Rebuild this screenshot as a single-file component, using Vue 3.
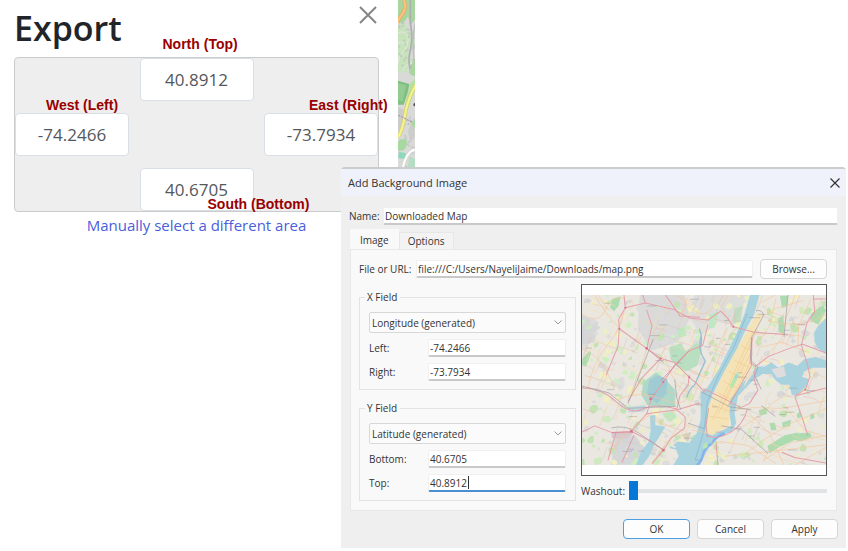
<script setup>
import { ref } from 'vue'

const north = ref('40.8912')
const west = ref('-74.2466')
const east = ref('-73.7934')
const south = ref('40.6705')
const name = ref('Downloaded Map')
const url = ref('file:///C:/Users/NayeliJaime/Downloads/map.png')
const washout = ref(0)

// Seeded generator so the street texture is the same on every load.
let seed = 41
const rnd = () => {
  seed = (seed * 16807) % 2147483647
  return seed / 2147483647
}
const range = (a, b) => Math.round(a + rnd() * (b - a))

const blob = (cx, cy, r) => {
  const pts = []
  for (let i = 0; i < 7; i++) {
    const a = (i / 7) * Math.PI * 2
    const d = r * (0.5 + rnd() * 0.7)
    pts.push(Math.round(cx + Math.cos(a) * d) + ',' + Math.round(cy + Math.sin(a) * d))
  }
  return pts.join(' ')
}
const tones = ['#dcdcdc', '#d6d7d6', '#cfeac0', '#c3e3b4', '#ecefc4', '#dddcda', '#d0eec3', '#f2f0c2']
const patches = Array.from({ length: 380 }, (_, i) => ({
  points: blob(range(22, 754), range(50, 554), range(4, 14)),
  fill: tones[i % tones.length],
}))
const streetTones = ['#f6d3a8', '#f3c9a0', '#eebcb2', '#f5e2a6', '#cfcccb']
const streets = Array.from({ length: 230 }, (_, i) => {
  const x = range(10, 740)
  const y = range(50, 550)
  const steep = rnd() > 0.42
  const l = range(25, 75)
  const dx = steep ? Math.round(l * 0.4) : l
  const dy = steep ? -l : Math.round(l * 0.35)
  return {
    d: `M${x} ${y}q${Math.round(dx / 2) + range(-8, 8)} ${Math.round(dy / 2) + range(-8, 8)} ${dx} ${dy}`,
    stroke: streetTones[i % streetTones.length],
  }
})
const labels = Array.from({ length: 44 }, () => ({
  x: range(30, 720),
  y: range(60, 545),
  w: range(12, 30),
}))
const houses = Array.from({ length: 90 }, () => ({
  x: range(0, 50),
  y: range(60, 500),
})).filter((h) => h.y > 335 || h.y < 200)
</script>

<template>
  <main class="page">
    <section class="export">
      <header class="export-head">
        <h1>Export</h1>
        <button class="dismiss" type="button" aria-label="Close export panel">
          <svg viewBox="0 0 18 18" width="18" height="18"><path d="M1 1L17 17M17 1L1 17" fill="none" stroke="#858585" stroke-width="2" /></svg>
        </button>
      </header>
      <div class="bounds">
        <div class="bound north">
          <label for="north">North (Top)</label>
          <input id="north" v-model="north" type="text" />
        </div>
        <div class="bound west">
          <label for="west">West (Left)</label>
          <input id="west" v-model="west" type="text" />
        </div>
        <div class="bound east">
          <label for="east">East (Right)</label>
          <input id="east" v-model="east" type="text" />
        </div>
        <div class="bound south">
          <label for="south">South (Bottom)</label>
          <input id="south" v-model="south" type="text" />
        </div>
      </div>
      <a class="manual" href="#">Manually select a different area</a>
    </section>

    <svg class="strip" viewBox="0 0 51 504" preserveAspectRatio="none" aria-hidden="true">
      <rect width="51" height="504" fill="#d9dad7" />
      <path d="M0 0H51V60L38 75 30 50 14 72 0 66Z" fill="#a9d69e" />
      <path d="M0 75L22 70 30 100 46 92 51 140 30 150 40 180 22 220 0 212Z" fill="#c6e3bb" />
      <path d="M32 205L51 175V230L35 222Z" fill="#a9d69e" />
      <g fill="none" stroke="#e8e7e2" stroke-width="3">
        <path d="M0 100Q14 90 26 104T20 150Q4 160 0 190M0 130Q12 120 18 134M12 215Q25 190 42 190" />
      </g>
      <path d="M37 0V70Q46 110 37 150T38 205" fill="none" stroke="#aeaeb2" stroke-width="5" />
      <path d="M51 70Q41 120 48 180" fill="none" stroke="#b9b7ba" stroke-width="3" />
      <path d="M0 242L34 252 30 275 17 314H0Z" fill="#7fbf80" />
      <path d="M0 250L24 256 14 305 0 300Z" fill="#93cb91" />
      <path d="M36 252L51 235V270L30 325 20 318Z" fill="#b5e0a6" />
      <g stroke="#c1c1c2" stroke-width="5" opacity=".8">
        <path v-for="(h, i) in houses" :key="i" :d="`M${h.x} ${h.y}l4 5`" />
      </g>
      <path d="M0 320L22 332 15 400 0 410M30 390L50 350V410L36 430Z" fill="#cccdcb" />
      <path d="M0 425Q30 405 26 432T0 450M38 370L51 385V360Z" fill="#a6d9a0" />
      <path d="M3 455L24 460 20 476 0 474Z" fill="#8fd8bd" />
      <path d="M34 475H51V504H28Z" fill="#b5dfc4" />
      <path d="M18 0Q26 26 12 44T0 70" fill="none" stroke="#eda95f" stroke-width="11" />
      <path d="M18 0Q26 26 12 44T0 70" fill="none" stroke="#fbc384" stroke-width="6" />
      <path d="M53 255Q28 300 21 345T0 412" fill="none" stroke="#d2ce68" stroke-width="11" />
      <path d="M53 255Q28 300 21 345T0 412" fill="none" stroke="#f3f391" stroke-width="7" />
      <path d="M0 345L42 366" stroke="#aaa1ae" stroke-width="4" stroke-dasharray="7 3" />
      <path d="M51 448Q22 458 15 504" fill="none" stroke="#fff" stroke-width="6" />
      <circle cx="51" cy="314" r="5" fill="#4b4e4c" />
    </svg>

    <form class="dialog" role="dialog" aria-labelledby="dlg-title" @submit.prevent>
      <header class="titlebar">
        <h2 id="dlg-title">Add Background Image</h2>
        <button class="close" type="button" aria-label="Close dialog">
          <svg viewBox="0 0 10 10" width="10" height="10"><path d="M0.5 0.5L9.5 9.5M9.5 0.5L0.5 9.5" fill="none" stroke="#333" stroke-width="1.2" /></svg>
        </button>
      </header>

      <div class="name-row">
        <label for="name">Name:</label>
        <input id="name" v-model="name" class="field" type="text" />
      </div>

      <div class="tabs" role="tablist">
        <button class="tab active" type="button" role="tab" aria-selected="true">Image</button>
        <button class="tab" type="button" role="tab" aria-selected="false">Options</button>
      </div>

      <div class="panel" role="tabpanel">
        <div class="file-row">
          <label for="url">File or URL:</label>
          <input id="url" v-model="url" class="field" type="text" />
          <button class="btn" type="button">Browse...</button>
        </div>

        <div class="columns">
          <div class="groups">
            <fieldset>
              <legend>X Field</legend>
              <select aria-label="X Field"><option>Longitude (generated)</option></select>
              <div class="pair">
                <label for="left">Left:</label>
                <input id="left" v-model="west" class="field" type="text" />
              </div>
              <div class="pair">
                <label for="right">Right:</label>
                <input id="right" v-model="east" class="field" type="text" />
              </div>
            </fieldset>
            <fieldset>
              <legend>Y Field</legend>
              <select aria-label="Y Field"><option>Latitude (generated)</option></select>
              <div class="pair">
                <label for="bottom">Bottom:</label>
                <input id="bottom" v-model="south" class="field" type="text" />
              </div>
              <div class="pair">
                <label for="top">Top:</label>
                <input id="top" v-model="north" class="field current" type="text" />
                <span class="caret"></span>
              </div>
            </fieldset>
          </div>

          <div class="preview-col">
            <div class="preview">
              <svg viewBox="22 50 732 504" preserveAspectRatio="none" role="img" aria-label="Map preview">
                <rect x="22" y="50" width="732" height="504" fill="#eae7e0" />
                <path d="M195 50H330L345 120 310 190 230 215 190 150Z" fill="#dadada" />
                <path d="M360 50H520L480 140 430 130 380 170 340 110Z" fill="#dddddb" />
                <path d="M22 110L70 130 60 190 22 200ZM120 475L180 465 215 510 180 553H110Z" fill="#d5d6d8" />
                <polygon v-for="(p, i) in patches" :key="'p' + i" :points="p.points" :fill="p.fill" />

                <!-- parks and marshes -->
                <g fill="#addbb0">
                  <path d="M112 62L138 54 132 82 118 98 106 88Z" />
                  <path d="M24 238L44 215 50 222 34 262 22 256Z" />
                  <path d="M616 52H640L636 84 622 88Z" />
                  <path d="M610 120L626 110 630 168 612 160Z" />
                  <path d="M578 498L630 466 672 458 668 476 612 502 584 520Z" />
                  <path d="M655 462L706 458 712 470 680 484 660 480Z" />
                  <path d="M552 392L572 386 578 402 556 408ZM622 428L650 420 646 440 624 442ZM666 405L676 392 682 412 668 416Z" />
                  <path d="M584 430L600 428 606 450 590 452ZM706 404L716 400 720 414 708 420Z" />
                  <path d="M710 105L744 80 754 96 732 138 708 126Z" />
                  <path d="M480 90L505 82 498 130 474 134Z" opacity=".6" />
                </g>
                <path d="M284 204L318 194 334 216 366 190 382 210 368 260 334 276 306 262 288 240Z" fill="#b8e0c0" />
                <path d="M206 308L244 280 272 300 300 330 302 378 262 384 218 376 200 346Z" fill="#afd8c9" />
                <path d="M224 302L248 288 278 300 276 342 246 372 216 346Z" fill="#a0cbd2" />
                <path d="M306 152L330 144 336 170 312 178ZM404 108L432 100 420 146 404 150ZM262 402L296 392 306 414 282 426Z" fill="#bee8c2" />
                <path d="M110 458L176 460 156 476 112 474Z" fill="#d6c9d0" />
                <path d="M320 464L350 456 340 486Z" fill="#d5ceb9" />

                <g fill="none" stroke-width="2" opacity=".75">
                  <path v-for="(s, i) in streets" :key="'s' + i" :d="s.d" :stroke="s.stroke" />
                </g>

                <!-- Manhattan -->
                <path d="M548 104L566 112 532 176 530 264 498 320 468 370 462 440 420 460 398 472 394 430 402 384 446 280Z" fill="#f5e3b8" />
                <g stroke="#f4c98b" stroke-width="2" fill="none">
                  <path d="M536 156L414 420M548 150L430 404M528 222L440 388M526 250L448 400M500 200L532 216M478 244L522 264M462 276L508 300M446 306L492 330M430 340L478 362M412 376L466 396M406 410L462 418" />
                </g>
                <path d="M484 280L494 286 474 326 464 322Z" fill="#b7e6ad" />
                <path d="M486 286L482 298" stroke="#a3d3e2" stroke-width="6" />

                <!-- water -->
                <g fill="#a9d2df">
                  <path d="M526 50H554L538 108 510 160 486 210 446 282 414 344 400 384 392 460 414 466 450 448 470 438 464 400 468 360 506 308 528 284 548 262 570 262 590 250 612 266 642 250 668 260 690 240 724 234 754 244V266L714 266 690 276 682 292 704 300 690 326 668 344 652 348 644 316 620 316 602 302 590 284 564 284 540 298 516 322 490 350 480 400 484 430 470 456 440 464 412 490 392 520 376 554H296L312 528 304 508 282 504 310 484 344 488 366 460 378 420 378 340 398 324 434 268 464 208 492 150 510 104Z" />
                  <path d="M730 142L754 118V226L730 208 720 190 718 162Z" />
                  <path d="M226 408L242 406 242 436 272 440 254 470 240 492 222 530 204 554H184L200 514 222 484 228 452Z" />
                  <path d="M158 382L208 376 218 384 206 396 162 398Z" opacity=".6" />
                </g>
                <path d="M518 104L478 204 428 296 398 368 388 452 362 538" fill="none" stroke="#86b4cf" stroke-width="2" />
                <path d="M450 460Q422 470 410 492 390 500 384 526 380 546 366 554" fill="none" stroke="#82b3ef" stroke-width="7" />
                <path d="M384 496L396 486 400 500 386 508Z" fill="#bce5b0" />
                <path d="M380 170Q366 210 392 246 376 280 360 316 344 328 336 354M374 150Q386 180 376 212" fill="none" stroke="#99bfcf" stroke-width="4" />
                <path d="M282 504L294 512M288 494L302 502M288 516L304 526M266 520L294 532" stroke="#eee8e1" stroke-width="5" />
                <path d="M590 270L628 262 634 290 608 296Z" fill="#dedcdd" />
                <path d="M516 292L528 274 536 282 506 324Z" fill="#e8dfcc" />

                <!-- secondary roads -->
                <g fill="none" stroke="#f4c79c" stroke-width="2">
                  <path d="M22 106Q70 140 92 94T150 60M60 50Q90 104 136 150M22 210Q84 230 120 330M40 326Q54 250 100 196T146 100M188 300L216 210 278 136M70 50L100 94M310 50Q348 92 372 104T430 72 500 52M270 230Q300 330 340 338M128 360Q200 330 266 360T352 332M100 530Q130 470 224 406" />
                  <path d="M462 50L440 84 470 142M454 150L430 206 396 276M480 150L438 220 412 296M560 72L602 50M566 112L604 90 686 66M604 60L584 142 542 204M662 50L634 120 620 182 568 238M710 60L672 140 670 200M540 166L600 164 684 172M562 204L622 190 700 220M580 126Q680 154 754 108" />
                  <path d="M472 392L534 384 620 386 754 364M490 448Q544 420 582 382T650 350M500 530L566 480 650 430 754 388M566 540L648 488 754 466M522 400L584 460 628 554M434 484L520 496 604 550M630 380L690 450 754 470M450 528Q580 516 754 494M660 554L754 502" />
                  <path d="M228 414Q274 446 300 436M260 508L298 458 330 414M234 544L270 498M352 450L392 458M410 468L412 492 436 520" />
                </g>

                <!-- motorways -->
                <g fill="none" stroke="#e5a0aa" stroke-width="3" stroke-linejoin="round">
                  <path d="M148 50L152 88 132 122 134 150 216 208 258 238 300 250 344 294 366 312 390 338" />
                  <path d="M204 50L212 74 300 94 344 118 400 124 438 98 460 120 476 144 536 160 640 168" />
                  <path d="M272 50L316 112 376 116M152 88L212 74M134 150L130 202 94 288M216 208L232 142 216 94" />
                  <path d="M22 326Q80 326 124 366T204 388 306 388M258 238L200 298 160 366" />
                  <path d="M400 138L384 200 342 216 300 258 266 308 230 358 216 402 170 454 112 458 60 438 22 456" />
                  <path d="M344 286L340 318 316 348 306 390 332 412 330 444 290 474 266 510 232 550" />
                  <path d="M170 454L228 484 266 510M124 458L100 540M178 466L142 546M216 402L308 390 376 370" />
                  <path d="M386 328L450 358 498 384 524 372 550 332 538 300 542 262 526 250 532 176M542 262L582 232 650 206 684 196 754 222" />
                  <path d="M716 50L720 100 698 130 680 198 698 254 706 292 692 330 660 350 682 412 700 468" />
                  <path d="M398 468Q426 480 466 458T518 388M424 486L430 554M622 516L660 532 754 548M754 62H716M664 348L754 326" />
                </g>
                <g fill="none" stroke="#d87e93" stroke-width="2">
                  <path d="M398 470L394 436 402 386M532 176L530 260 496 320 462 378M216 208L266 250M112 458H176M344 216L258 304" />
                </g>
                <!-- rail lines -->
                <g fill="none" stroke="#9d9da3" stroke-width="2">
                  <path d="M544 96Q566 94 566 112L530 178 528 244 550 264 540 290 560 330M22 320L102 340 160 386 304 380M236 180L188 302 160 372M378 336L466 382 530 390M440 438L500 448 580 520M640 50L628 174M110 444Q152 434 190 458L268 510M300 300L306 354 318 390M340 430L388 446M560 378L602 410" />
                </g>
                <g fill="#8b8d95">
                  <rect v-for="(l, i) in labels" :key="'l' + i" :x="l.x" :y="l.y" :width="l.w" height="3" opacity=".4" />
                </g>
                <g fill="#dd7088">
                  <circle cx="152" cy="88" r="3" /><circle cx="134" cy="150" r="3" /><circle cx="216" cy="208" r="4" /><circle cx="258" cy="238" r="3" /><circle cx="228" cy="358" r="4" /><circle cx="266" cy="308" r="3" /><circle cx="344" cy="294" r="3" /><circle cx="170" cy="454" r="4" /><circle cx="266" cy="510" r="4" /><circle cx="476" cy="144" r="3" /><circle cx="692" cy="330" r="3" />
                </g>
              </svg>
            </div>
            <div class="washout">
              <label for="washout">Washout:</label>
              <input id="washout" v-model="washout" type="range" min="0" max="100" />
            </div>
          </div>
        </div>
      </div>

      <footer class="actions">
        <button class="btn primary" type="submit">OK</button>
        <button class="btn" type="button">Cancel</button>
        <button class="btn" type="button">Apply</button>
      </footer>
    </form>
  </main>
</template>

<style>
body {
  background: #fff;
}
</style>

<style scoped>
.page,
.page * {
  box-sizing: border-box;
}
.page {
  position: relative;
  display: flex;
  align-items: flex-start;
  min-height: 100vh;
  overflow: hidden;
  font-family: "Open Sans", "Noto Sans", sans-serif;
}
button,
input,
select {
  font: inherit;
  color: inherit;
  margin: 0;
  border-radius: 0;
  outline: none;
}
.export {
  flex: none;
  width: 398px;
  padding: 6px 19px 0 14px;
  display: flex;
  flex-direction: column;
}
.export-head {
  display: flex;
  justify-content: space-between;
  align-items: flex-start;
  height: 51px;
}
h1 {
  margin: 0;
  font-size: 34px;
  line-height: 44px;
  font-weight: 600;
  color: #212529;
}
.dismiss {
  padding: 0;
  margin-right: 2px;
  width: 18px;
  height: 18px;
  border: 0;
  background: none;
}
.dismiss svg,
.close svg {
  display: block;
}
.bounds {
  display: grid;
  grid-template-columns: 114px 114px 114px;
  justify-content: space-between;
  grid-template-rows: 43px 43px 43px;
  row-gap: 12px;
  border: 1px solid #c9cccd;
  border-radius: 4px;
  background: #eee;
}
.bound {
  position: relative;
}
.north {
  grid-area: 1 / 2;
}
.west {
  grid-area: 2 / 1;
}
.east {
  grid-area: 2 / 3;
}
.south {
  grid-area: 3 / 2;
}
.bound input {
  display: block;
  width: 100%;
  height: 100%;
  padding: 0;
  border: 1px solid #d9dfe4;
  border-radius: 4px;
  background: #fff;
  font-size: 17px;
  text-align: center;
  color: #54575b;
}
.bound label {
  position: absolute;
  top: -16px;
  left: 31px;
  font: bold 14px/16px "Liberation Sans", Arial, sans-serif;
  color: #990000;
  white-space: nowrap;
}
.north label {
  top: -22px;
  left: 23px;
}
.east label {
  left: 45px;
}
.south label {
  top: 28px;
  left: 68px;
}
.manual {
  align-self: center;
  font-size: 15px;
  line-height: 26px;
  color: #4a60dc;
  text-decoration: none;
}
.strip {
  display: block;
  width: 17px;
  height: 168px;
}
.dialog {
  position: absolute;
  top: 167px;
  left: 341px;
  right: 2px;
  border-top: 2px solid #cbcccd;
  background: #efefef;
  border-radius: 4px 4px 0 0;
  font-size: 10px;
  line-height: 14px;
  color: #333;
}
.titlebar {
  display: flex;
  justify-content: space-between;
  align-items: center;
  height: 27px;
  padding: 0 6px 0 7px;
  background: #eff2fb;
}
h2 {
  margin: 0;
  font-size: 11px;
  font-weight: 400;
}
.close {
  width: 10px;
  height: 10px;
  padding: 0;
  border: 0;
  background: none;
}
.field {
  flex: 1;
  min-width: 0;
  height: 18px;
  padding: 0 1px;
  border: 1px solid #f0f0f0;
  border-bottom: 2px solid #c9c9c9;
  border-radius: 2px;
  background: #fff;
}
.name-row {
  display: flex;
  align-items: center;
  padding: 11px 8px 0;
}
.name-row label {
  width: 34px;
}
.tabs {
  display: flex;
  align-items: flex-end;
  height: 24px;
  padding-left: 9px;
}
.tab {
  height: 17px;
  padding: 0 8px;
  border: 1px solid #e7e7e7;
  border-bottom: 0;
  background: #f3f3f3;
  line-height: 16px;
}
.tab.active {
  height: 20px;
  padding: 0 9px;
  background: #f9f9f9;
  border-color: #f9f9f9;
}
.panel {
  margin: 0 9px;
  padding: 9px 9px 9px 8px;
  border: 1px solid #e8e8e8;
  background: #f9f9f9;
}
.file-row {
  display: flex;
  align-items: center;
}
.file-row label {
  width: 57px;
}
.btn {
  width: 67px;
  height: 20px;
  padding: 0;
  border: 1px solid #d6d6d6;
  border-radius: 4px;
  background: #fdfdfd;
}
.file-row .btn {
  margin-left: 7px;
}
.columns {
  display: flex;
  gap: 5px;
}
.groups {
  flex: none;
  width: 217px;
  padding-top: 11px;
}
fieldset {
  min-width: 0;
  margin: 0 0 11px;
  padding: 8px 9px;
  border: 1px solid #e3e3e3;
}
fieldset:last-child {
  margin: 0;
}
legend {
  padding: 0 3px 0 2px;
  margin-left: -4px;
}
select {
  display: block;
  width: 100%;
  height: 21px;
  padding: 0 2px;
  border: 1px solid #d8d8d8;
  border-radius: 2px;
  appearance: none;
  background: #fbfbfb url("data:image/svg+xml,%3Csvg xmlns='http://www.w3.org/2000/svg' width='8' height='5'%3E%3Cpath d='M.5 .5L4 4 7.5 .5' fill='none' stroke='%23999'/%3E%3C/svg%3E") no-repeat right 3px center;
}
.pair {
  position: relative;
  display: flex;
  align-items: center;
  margin-top: 6px;
}
.pair label {
  width: 59px;
}
.current {
  border-bottom-color: #4a90d0;
}
.caret {
  position: absolute;
  left: 99px;
  top: 2px;
  width: 1px;
  height: 13px;
  background: #333;
}
.preview-col {
  flex: 1;
  min-width: 0;
  padding-top: 5px;
}
.preview {
  padding: 10px 0;
  border: 1px solid #555;
  background: #fff;
}
.preview svg {
  display: block;
  width: 100%;
  height: 170px;
}
.washout {
  display: flex;
  align-items: center;
  padding-top: 5px;
}
.washout label {
  width: 48px;
}
.washout input {
  flex: 1;
  min-width: 0;
  height: 19px;
  appearance: none;
  background: linear-gradient(#e1e4e4, #e1e4e4) center / 100% 4px no-repeat;
}
.washout input::-webkit-slider-thumb {
  appearance: none;
  width: 9px;
  height: 19px;
  background: #0878d6;
}
.actions {
  display: flex;
  justify-content: flex-end;
  gap: 7px;
  padding: 8px 8px 9px;
}
.primary {
  border-color: #4c9fe0;
}
</style>
